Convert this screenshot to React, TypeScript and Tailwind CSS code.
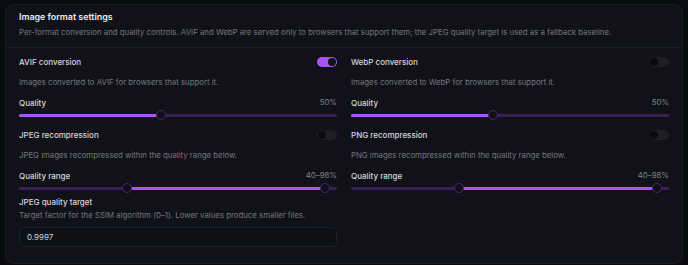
import React from 'react';

const MIN = 10;
const MAX = 100;
const THUMB = 10;

const pct = (v: number) => (v - MIN) / (MAX - MIN);
const pos = (v: number) => `calc(${THUMB / 2}px + ${pct(v)} * (100% - ${THUMB}px))`;

const Toggle: React.FC<{ on?: boolean }> = ({ on }) => (
  <div
    className={`w-[20px] h-[10px] rounded-full flex items-center px-[1px] ${
      on ? 'bg-[#a855f7] justify-end' : 'bg-[#1d1e26] justify-start'
    }`}
  >
    <div className={`w-[8px] h-[8px] rounded-full ${on ? 'bg-[#121218]' : 'bg-[#0a0b0f]'}`} />
  </div>
);

const Thumb: React.FC<{ at: string }> = ({ at }) => (
  <div
    className="absolute top-1/2 w-[10px] h-[10px] -mt-[5px] -ml-[5px] rounded-full bg-[#0f1016] border border-[#4a2475]"
    style={{ left: at }}
  />
);

const Slider: React.FC<{ from?: number; to: number }> = ({ from, to }) => {
  const start = from === undefined ? '0px' : pos(from);
  return (
    <div className="relative h-[10px]">
      <div className="absolute left-0 right-0 top-1/2 h-[3px] -mt-[1.5px] rounded-full bg-[#3a1f58]" />
      <div
        className="absolute top-1/2 h-[3px] -mt-[1.5px] rounded-full bg-[#a855f7]"
        style={{ left: start, width: `calc(${pos(to)} - ${start})` }}
      />
      {from !== undefined && <Thumb at={pos(from)} />}
      <Thumb at={pos(to)} />
    </div>
  );
};

type Format = {
  title: string;
  desc: string;
  on?: boolean;
  label: string;
  value: string;
  from?: number;
  to: number;
};

const FormatBlock: React.FC<{ f: Format }> = ({ f }) => (
  <>
    <div className="h-[16px] flex items-center justify-between">
      <span className="text-[8px] font-medium text-[#d6d7dc]">{f.title}</span>
      <Toggle on={f.on} />
    </div>
    <p className="mt-[5px] h-[14px] leading-[14px] text-[7.8px] text-[#73767f]">{f.desc}</p>
    <div className="mt-[7px] h-[14px] flex items-center justify-between">
      <span className="text-[8px] font-medium text-[#d6d7dc]">{f.label}</span>
      <span className="text-[7.8px] text-[#80838c]">{f.value}</span>
    </div>
    <Slider from={f.from} to={f.to} />
  </>
);

const left: Format[] = [
  { title: 'AVIF conversion', desc: 'Images converted to AVIF for browsers that support it.', on: true, label: 'Quality', value: '50%', to: 50 },
  { title: 'JPEG recompression', desc: 'JPEG images recompressed within the quality range below.', label: 'Quality range', value: '40–98%', from: 40, to: 98 },
];

const right: Format[] = [
  { title: 'WebP conversion', desc: 'Images converted to WebP for browsers that support it.', label: 'Quality', value: '50%', to: 50 },
  { title: 'PNG recompression', desc: 'PNG images recompressed within the quality range below.', label: 'Quality range', value: '40–98%', from: 40, to: 98 },
];

const Column: React.FC<{ items: Format[]; children?: React.ReactNode }> = ({ items, children }) => (
  <div className="flex flex-col">
    {items.map((f, i) => (
      <div key={f.title} className={`flex flex-col ${i > 0 ? 'mt-[7px]' : ''}`}>
        <FormatBlock f={f} />
      </div>
    ))}
    {children}
  </div>
);

export default function App() {
  return (
    <div className="w-[688px] h-[265px] bg-[#0a0b0f] pt-[4px] px-[5px]" style={{ fontFamily: 'Inter, "Noto Sans", sans-serif' }}>
      <div className="rounded-[8px] border border-[#1a1c23] bg-[#111219]">
        <div className="px-[13px] pt-[5px] pb-[8px] border-b border-[#1c1e25]">
          <h2 className="h-[14px] leading-[14px] text-[8.9px] font-semibold text-[#ececef]">Image format settings</h2>
          <p className="mt-[1px] h-[14px] leading-[14px] text-[7.8px] text-[#73767f]">
            Per-format conversion and quality controls. AVIF and WebP are served only to browsers that support them; the JPEG quality target is used as a fallback baseline.
          </p>
        </div>
        <div className="grid grid-cols-2 gap-x-[14px] px-[13px] pt-[6px] pb-[16px]">
          <Column items={left}>
            <h3 className="mt-[3px] h-[13px] leading-[13px] text-[8px] font-medium text-[#d6d7dc]">JPEG quality target</h3>
            <p className="h-[13px] leading-[13px] text-[7.8px] text-[#73767f]">
              Target factor for the SSIM algorithm (0–1). Lower values produce smaller files.
            </p>
            <div className="mt-[5px] h-[20px] rounded-[4px] border border-[#1c1e26] bg-[#0f1016] px-[7px] flex items-center text-[8px] text-[#d6d7dc]">
              0.9997
            </div>
          </Column>
          <Column items={right} />
        </div>
      </div>
    </div>
  );
}
